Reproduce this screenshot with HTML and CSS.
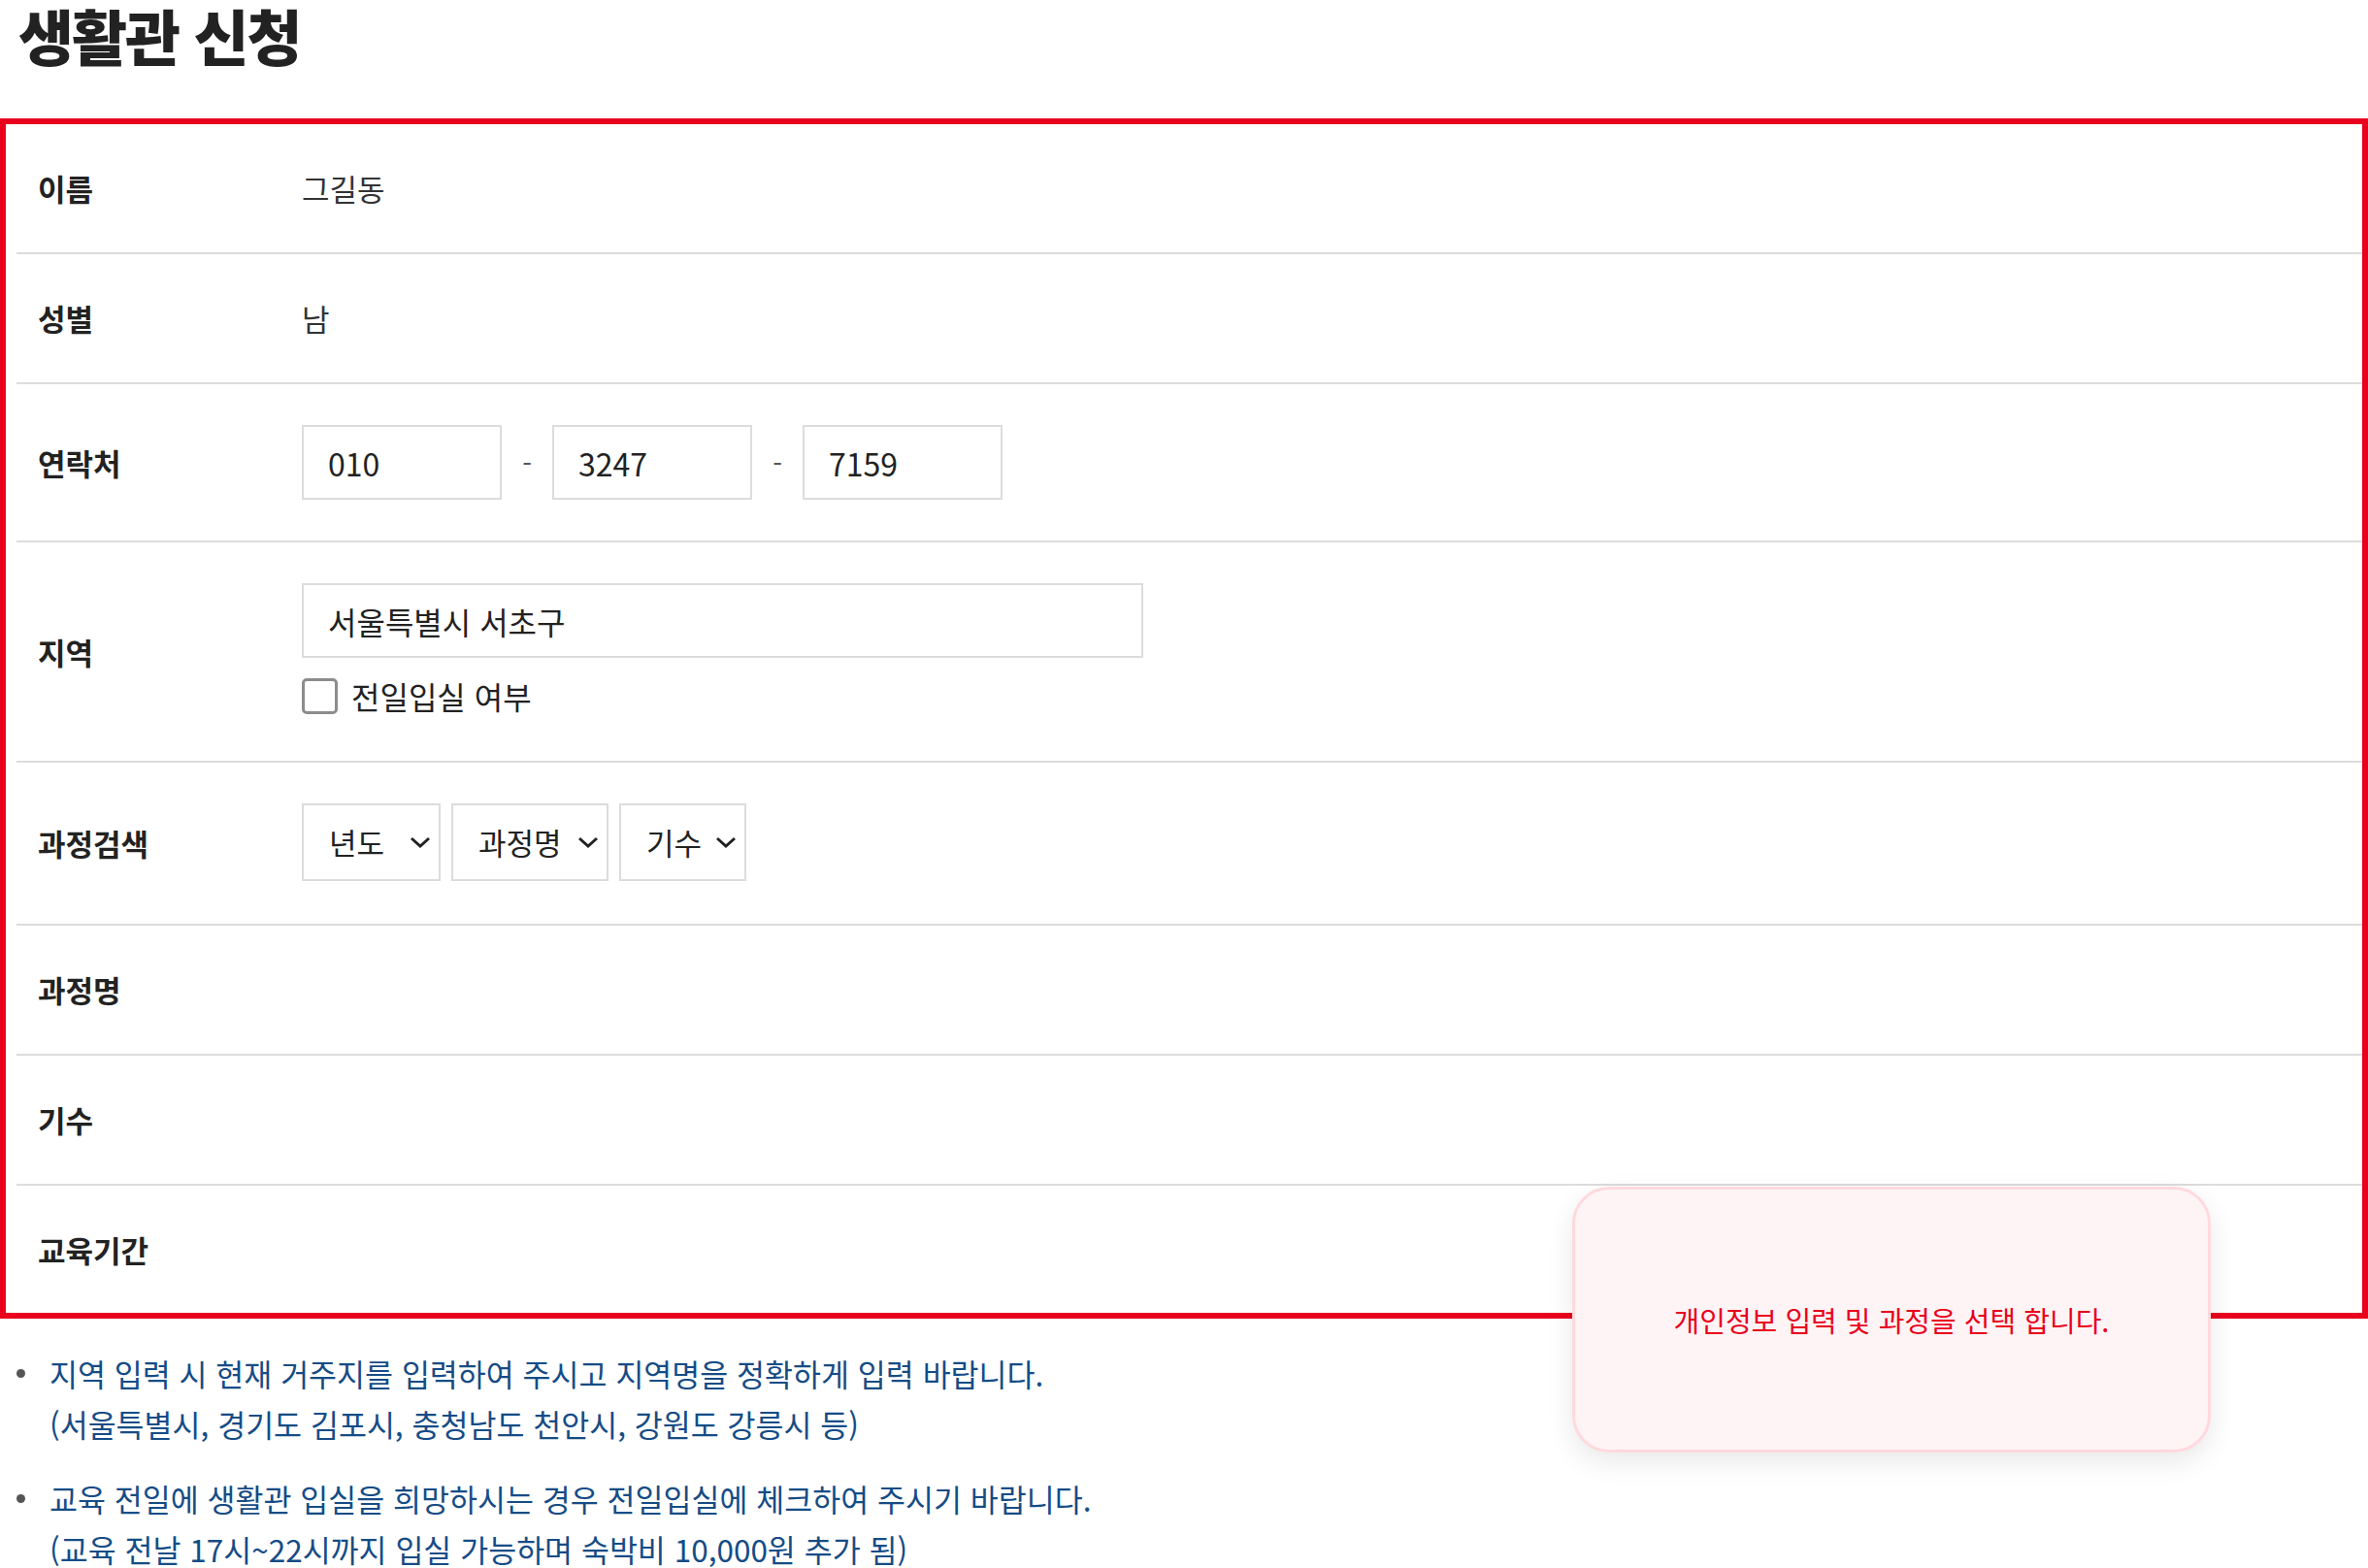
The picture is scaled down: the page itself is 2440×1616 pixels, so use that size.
FILE: index.html
```html
<!DOCTYPE html>
<html lang="ko">
<head>
<meta charset="utf-8">
<title>생활관 신청</title>
<link rel="stylesheet" href="styles.css">
</head>
<body>
<div class="page">
  <h1 class="title">생활관 신청</h1>

  <div class="form-box">
    <div class="row">
      <div class="label">이름</div>
      <div class="value">그길동</div>
    </div>
    <div class="row">
      <div class="label">성별</div>
      <div class="value">남</div>
    </div>
    <div class="row row-field">
      <div class="label">연락처</div>
      <div class="value phone">
        <div class="input input-phone">010</div>
        <span class="dash">-</span>
        <div class="input input-phone">3247</div>
        <span class="dash">-</span>
        <div class="input input-phone">7159</div>
      </div>
    </div>
    <div class="row row-area">
      <div class="label">지역</div>
      <div class="value area">
        <div class="input input-address">서울특별시 서초구</div>
        <label class="check">
          <span class="checkbox"></span>
          <span class="check-text">전일입실 여부</span>
        </label>
      </div>
    </div>
    <div class="row row-select">
      <div class="label">과정검색</div>
      <div class="value selects">
        <div class="select select-year"><span>년도</span>
          <svg class="chev" viewBox="0 0 22 12" width="22" height="12"><path d="M2 2 L11 10 L20 2" fill="none" stroke="#222" stroke-width="3"/></svg>
        </div>
        <div class="select select-course"><span>과정명</span>
          <svg class="chev" viewBox="0 0 22 12" width="22" height="12"><path d="M2 2 L11 10 L20 2" fill="none" stroke="#222" stroke-width="3"/></svg>
        </div>
        <div class="select select-term"><span>기수</span>
          <svg class="chev" viewBox="0 0 22 12" width="22" height="12"><path d="M2 2 L11 10 L20 2" fill="none" stroke="#222" stroke-width="3"/></svg>
        </div>
      </div>
    </div>
    <div class="row">
      <div class="label">과정명</div>
      <div class="value"></div>
    </div>
    <div class="row">
      <div class="label">기수</div>
      <div class="value"></div>
    </div>
    <div class="row row-last">
      <div class="label">교육기간</div>
      <div class="value"></div>
    </div>
  </div>

  <ul class="notes">
    <li>지역 입력 시 현재 거주지를 입력하여 주시고 지역명을 정확하게 입력 바랍니다.<br>(서울특별시, 경기도 김포시, 충청남도 천안시, 강원도 강릉시 등)</li>
    <li>교육 전일에 생활관 입실을 희망하시는 경우 전일입실에 체크하여 주시기 바랍니다.<br>(교육 전날 17시~22시까지 입실 가능하며 숙박비 10,000원 추가 됨)</li>
  </ul>

  <div class="tip">개인정보 입력 및 과정을 선택 합니다.</div>
</div>
</body>
</html>
```

FILE: styles.css
```css
* {
  box-sizing: border-box;
}

html, body {
  margin: 0;
  padding: 0;
  background: #ffffff;
}

body {
  font-family: "Noto Sans CJK KR", "Noto Sans", sans-serif;
  color: #222;
}

.page {
  position: relative;
  width: 2440px;
  min-height: 1616px;
}

.title {
  margin: 0 0 50px 0;
  padding-left: 19px;
  height: 72px;
  font-size: 62px;
  line-height: 72px;
  font-weight: 900;
  letter-spacing: -2px;
  color: #222;
}

.form-box {
  border: 6px solid #e8001c;
  padding-left: 11px;
}

.row {
  display: grid;
  grid-template-columns: 294px 1fr;
  align-items: center;
  min-height: 134px;
  border-bottom: 2px solid #dcdcdc;
}

.row-last {
  border-bottom: none;
  min-height: 131px;
}

.label {
  padding-left: 22px;
  font-size: 31px;
  line-height: 40px;
  font-weight: 700;
  color: #222;
}

.value {
  font-size: 31px;
  line-height: 40px;
  color: #333;
}

.row-field .value {
  padding: 42px 0 42px 0;
}

.phone {
  display: flex;
  align-items: center;
}

.input {
  height: 77px;
  border: 2px solid #dcdcdc;
  background: #fff;
  padding-left: 25px;
  display: flex;
  align-items: center;
  font-size: 32px;
  color: #222;
}

.input-phone {
  width: 206px;
}

.dash {
  width: 52px;
  text-align: center;
  color: #555;
  font-size: 28px;
}

.area {
  display: flex;
  flex-direction: column;
  align-items: flex-start;
  padding: 42px 0 48px 0;
  gap: 21px;
}

.input-address {
  width: 867px;
}

.check {
  display: flex;
  align-items: center;
  gap: 14px;
  height: 37px;
}

.checkbox {
  width: 37px;
  height: 37px;
  border: 3px solid #8c8c8c;
  border-radius: 5px;
  background: #fff;
}

.check-text {
  font-size: 32px;
  line-height: 37px;
  color: #222;
}

.selects {
  display: flex;
  gap: 11px;
  padding: 42px 0 44px 0;
}

.select {
  height: 80px;
  border: 2px solid #dcdcdc;
  display: flex;
  align-items: center;
  justify-content: space-between;
  padding: 0 8px 0 26px;
  font-size: 31px;
  color: #222;
}

.select-year { width: 143px; }
.select-course { width: 162px; }
.select-term { width: 131px; }

.chev {
  display: block;
  flex: none;
}

.notes {
  list-style: none;
  margin: 30px 0 0 0;
  padding: 0;
}

.notes li {
  position: relative;
  padding-left: 51px;
  font-size: 31.5px;
  line-height: 52px;
  color: #154c86;
  margin-bottom: 25px;
}

.notes li:last-child {
  margin-bottom: 0;
}

.notes li::before {
  content: "";
  position: absolute;
  left: 17px;
  top: 22px;
  width: 9px;
  height: 9px;
  border-radius: 50%;
  background: #555;
}

.tip {
  position: absolute;
  left: 1620px;
  top: 1223px;
  width: 658px;
  height: 274px;
  display: flex;
  align-items: center;
  justify-content: center;
  background: #fff4f5;
  border: 3px solid #ffd9dd;
  border-radius: 38px;
  box-shadow: 0 10px 28px rgba(0, 0, 0, 0.09);
  font-size: 29px;
  color: #e8001c;
}
```
